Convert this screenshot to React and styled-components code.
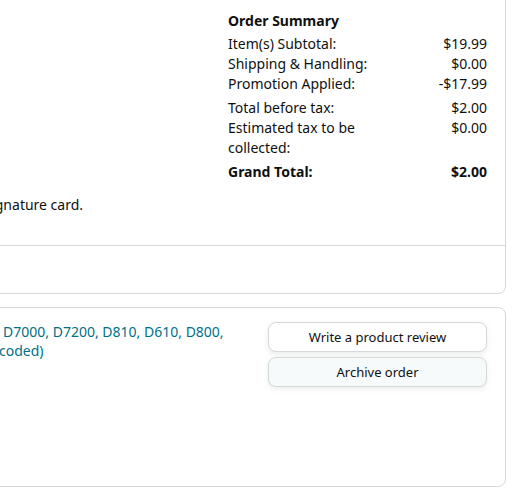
import styled, { createGlobalStyle } from "styled-components";

const GlobalStyle = createGlobalStyle`
  html, body {
    margin: 0;
    padding: 0;
    background: #ffffff;
    overflow: hidden;
  }
  body {
    font-family: "Noto Sans", "Open Sans", Arial, sans-serif;
    font-size: 14px;
    line-height: 20px;
    color: #0f1111;
  }
`;

const summaryRows = [
  [
    ["Item(s) Subtotal:", "$19.99"],
    ["Shipping & Handling:", "$0.00"],
    ["Promotion Applied:", "-$17.99"],
  ],
  [
    ["Total before tax:", "$2.00"],
    ["Estimated tax to be collected:", "$0.00"],
  ],
];

const App = () => {
  return (
    <>
      <GlobalStyle />
      <Page>
        <Card>
          <TopSection>
            <DetailsColumns>
              <Column>
                <Heading>Ship to</Heading>
                <Line>Jane Doe</Line>
                <Line>12 Main St</Line>
                <Line>Portland, OR</Line>
                <Line>United States</Line>
              </Column>
              <Column>
                <Heading>Payment</Heading>
                <Line>Visa ****1234</Line>
                <Note>Bring ID and your signature card.</Note>
              </Column>
            </DetailsColumns>

            <Summary>
              <Heading>Order Summary</Heading>
              {summaryRows.map((group, gi) => (
                <SummaryGroup key={gi}>
                  {group.map(([label, value]) => (
                    <SummaryRow key={label}>
                      <span>{label}</span>
                      <Amount>{value}</Amount>
                    </SummaryRow>
                  ))}
                </SummaryGroup>
              ))}
              <SummaryGroup>
                <SummaryRow $bold>
                  <span>Grand Total:</span>
                  <Amount>$2.00</Amount>
                </SummaryRow>
              </SummaryGroup>
            </Summary>
          </TopSection>
          <FooterSection>
            <Line>Transactions</Line>
          </FooterSection>
        </Card>

        <ItemCard>
          <ItemRow>
            <ProductInfo>
              <Thumb />
              <ProductText>
                <ProductLink href="#">
                  EN-EL15 Battery for Nikon D7500, D7000, D7200, D810, D610, D800, D750, D780, D850, D5300, Zfc (Decoded)
                </ProductLink>
              </ProductText>
            </ProductInfo>
            <Actions>
              <ActionButton>Write a product review</ActionButton>
              <ActionButton $tinted>Archive order</ActionButton>
            </Actions>
          </ItemRow>
        </ItemCard>
      </Page>
    </>
  );
};

export default App;

const Page = styled.div`
  width: 906px;
  margin-left: -400px;
  margin-top: -8px;
`;

const Card = styled.div`
  border: 1px solid #d5d9d9;
  border-radius: 8px;
  background: #ffffff;
`;

const TopSection = styled.div`
  display: grid;
  grid-template-columns: 1fr 259px;
  gap: 18px;
  padding: 18px 18px 30px;
`;

const DetailsColumns = styled.div`
  display: grid;
  grid-template-columns: 227px 1fr;
  gap: 18px;
`;

const Column = styled.div`
  display: flex;
  flex-direction: column;
`;

const Heading = styled.div`
  font-weight: 700;
`;

const Line = styled.div``;

const Note = styled.div`
  margin-top: 144px;
  white-space: nowrap;
`;

const Summary = styled.div`
  display: flex;
  flex-direction: column;
`;

const SummaryGroup = styled.div`
  margin-top: 4px;
  &:nth-child(2) {
    margin-top: 3px;
  }
`;

const SummaryRow = styled.div`
  display: grid;
  grid-template-columns: 60% 40%;
  font-weight: ${(p) => (p.$bold ? 700 : 400)};
`;

const Amount = styled.span`
  text-align: right;
`;

const FooterSection = styled.div`
  border-top: 1px solid #d5d9d9;
  padding: 14px 18px 13px;
  color: transparent;
`;

const ItemCard = styled(Card)`
  margin-top: 13px;
`;

const ItemRow = styled.div`
  display: flex;
  gap: 30px;
  min-height: 150px;
  padding: 14px 18px;
`;

const ProductInfo = styled.div`
  flex: 1;
  display: flex;
  gap: 16px;
`;

const Thumb = styled.div`
  width: 144px;
  height: 100px;
  flex-shrink: 0;
`;

const ProductText = styled.div`
  flex: 1;
  line-height: 19px;
`;

const ProductLink = styled.a`
  color: #007185;
  text-decoration: none;
`;

const Actions = styled.div`
  width: 219px;
  display: flex;
  flex-direction: column;
  gap: 5px;
`;

const ActionButton = styled.button`
  height: 30px;
  width: 100%;
  border: 1px solid #d5d9d9;
  border-radius: 8px;
  background: ${(p) => (p.$tinted ? "#f7fafa" : "#ffffff")};
  box-shadow: 0 2px 5px 0 rgba(213, 217, 217, 0.5);
  font-family: inherit;
  font-size: 13px;
  color: #0f1111;
  cursor: pointer;
`;
